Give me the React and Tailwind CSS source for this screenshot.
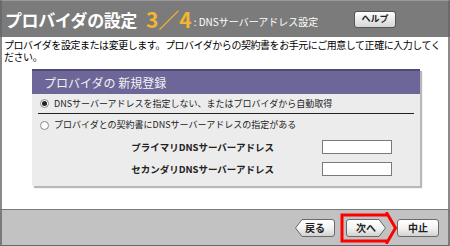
import React from "react";

const jp = { fontFamily: '"Noto Sans CJK JP", "Liberation Sans", sans-serif' };

function Radio({ checked }) {
  return (
    <span className="w-[9px] h-[9px] rounded-full border border-[#8a8a8a] bg-white flex items-center justify-center shrink-0">
      {checked && <span className="w-[5px] h-[5px] rounded-full bg-[#222]" />}
    </span>
  );
}

function ArrowButton({ label, dir, w = 40 }) {
  const h = 18;
  let path;
  if (dir === "left") {
    path = `M7 0.5 H${w - 3} Q${w - 0.5} 0.5 ${w - 0.5} 3 V${h - 3} Q${w - 0.5} ${h - 0.5} ${w - 3} ${h - 0.5} H7 L0.5 ${h / 2} Z`;
  } else if (dir === "right") {
    path = `M0.5 3 Q0.5 0.5 3 0.5 H${w - 7} L${w - 0.5} ${h / 2} L${w - 7} ${h - 0.5} H3 Q0.5 ${h - 0.5} 0.5 ${h - 3} Z`;
  } else {
    path = `M0.5 3 Q0.5 0.5 3 0.5 H${w - 3} Q${w - 0.5} 0.5 ${w - 0.5} 3 V${h - 3} Q${w - 0.5} ${h - 0.5} ${w - 3} ${h - 0.5} H3 Q0.5 ${h - 0.5} 0.5 ${h - 3} Z`;
  }
  return (
    <div className="relative h-[18px]" style={{ width: w }}>
      <svg width={w} height={h} className="absolute inset-0">
        <defs>
          <linearGradient id={`g${label}`} x1="0" y1="0" x2="0" y2="1">
            <stop offset="0" stopColor="#ffffff" />
            <stop offset="0.5" stopColor="#f4f4f4" />
            <stop offset="1" stopColor="#cfcfcf" />
          </linearGradient>
        </defs>
        <path d={path} fill={`url(#g${label})`} stroke="#6a6a6a" strokeWidth="1" />
      </svg>
      <span className="relative flex h-full items-center justify-center text-[10px] font-bold text-[#222]" style={jp}>
        {label}
      </span>
    </div>
  );
}

export default function App() {
  return (
    <div className="w-[450px] h-[246px] flex flex-col bg-white overflow-hidden" style={jp}>
      {/* Header */}
      <div className="h-[37px] shrink-0 bg-[#7b7b7b] border-t border-[#9a9a9a] border-x-2 border-x-[#6a6a6a] flex items-center pl-[3px] pr-[52px]">
        <span className="text-[17px] font-bold text-white tracking-tight leading-none">プロバイダの設定</span>
        <span className="ml-[9px] text-[21px] font-bold text-[#f2b62e] leading-none">3／4</span>
        <span className="ml-[2px] mt-[5px] text-[10px] text-white leading-none">: DNSサーバーアドレス設定</span>
        <div className="ml-auto w-[42px] h-[17px] rounded-[3px] border border-[#555] bg-gradient-to-b from-white to-[#d6d6d6] flex items-center justify-center text-[9px] font-bold text-[#222]">
          ヘルプ
        </div>
      </div>

      {/* Content */}
      <div className="flex-1 border-x-2 border-x-[#8a8a8a] flex flex-col">
        <p className="px-[2px] pt-[2px] text-[10px] leading-[12px] text-black tracking-[-0.45px]">
          プロバイダを設定または変更します。プロバイダからの契約書をお手元にご用意して正確に入力してください。
        </p>

        <div className="ml-[30px] mr-[28px] mt-[6px] shadow-[2px_2px_1px_#b8b8b8]">
          <div className="h-[25px] bg-[#6d6699] border-t-2 border-[#4f4a78] flex items-center pl-[12px] text-[12px] text-[#f2f2f2]">
            プロバイダの 新規登録
          </div>
          <div className="bg-[#ececec] px-[6px] pb-[6px]">
            <div className="h-[20px] flex items-center gap-[5px] pl-[2px] border-b border-[#222] text-[9px] text-[#222]">
              <Radio checked />
              DNSサーバーアドレスを指定しない、またはプロバイダから自動取得
            </div>
            <div className="h-[22px] flex items-center gap-[5px] pl-[2px] text-[9px] text-[#222]">
              <Radio />
              プロバイダとの契約書にDNSサーバーアドレスの指定がある
            </div>
            <div className="flex items-center h-[22px] text-[9.5px] font-bold text-[#222]">
              <span className="w-[236px] text-right">プライマリDNSサーバーアドレス</span>
              <span className="ml-[48px] w-[70px] h-[14px] bg-white border border-[#7a7a7a]" />
            </div>
            <div className="flex items-center h-[22px] text-[9.5px] font-bold text-[#222]">
              <span className="w-[236px] text-right">セカンダリDNSサーバーアドレス</span>
              <span className="ml-[48px] w-[70px] h-[14px] bg-white border border-[#7a7a7a]" />
            </div>
          </div>
        </div>
      </div>

      {/* Footer */}
      <div className="h-[37px] shrink-0 bg-[#c2c2c2] border-t border-[#7a7a7a] border-b border-x-2 border-x-[#7a7a7a] border-b-[#6a6a6a] flex items-center justify-end gap-[11px] pr-[9px]">
        <ArrowButton label="戻る" dir="left" w={40} />
        <div className="relative">
          <ArrowButton label="次へ" dir="right" w={40} />
          <svg width="58" height="32" className="absolute left-[-6px] top-[-7px]">
            <path d="M2 3 H47 V1.5 L55.5 16 L47 30.5 V29 H2 Z" fill="none" stroke="#ff0000" strokeWidth="3" strokeLinejoin="miter" />
          </svg>
        </div>
        <ArrowButton label="中止" dir="none" w={42} />
      </div>
    </div>
  );
}
